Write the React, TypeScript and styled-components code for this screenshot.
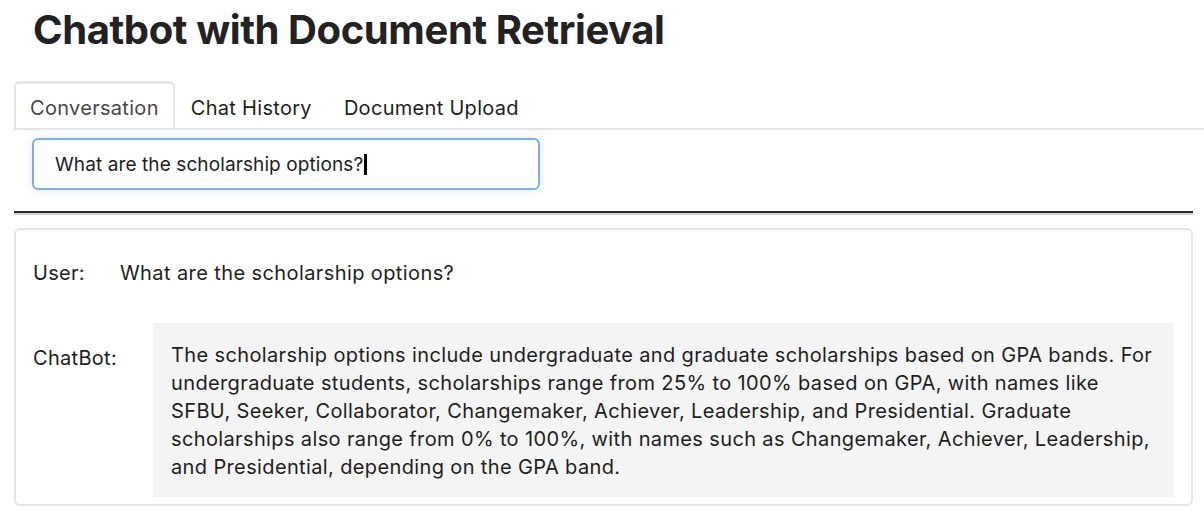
import React from "react";
import styled, { createGlobalStyle } from "styled-components";

const Global = createGlobalStyle`
  html, body { margin: 0; padding: 0; background: #fff; }
  body { font-family: Inter, "Noto Sans", sans-serif; color: #1f1f1f; }
`;

const Page = styled.div`
  width: 1204px;
  height: 520px;
  box-sizing: border-box;
  padding: 0 11px 0 14px;
  overflow: hidden;
`;

const Title = styled.h1`
  margin: 0;
  padding: 6px 0 0 19px;
  height: 81px;
  box-sizing: border-box;
  font-family: Inter, "Liberation Sans", sans-serif;
  font-size: 40px;
  line-height: 48px;
  font-weight: 700;
  letter-spacing: -0.4px;
  color: #222;
`;

const TabBar = styled.div`
  display: flex;
  align-items: flex-start;
  border-bottom: 2px solid #e3e3e3;
  height: 49px;
  box-sizing: border-box;
  margin-right: -11px;
`;

const Tab = styled.div<{ $active?: boolean }>`
  height: 47px;
  box-sizing: border-box;
  display: flex;
  align-items: center;
  padding: 4px 14px 0 14px;
  font-size: 20px;
  letter-spacing: 0.3px;
  color: ${(p) => (p.$active ? "#474747" : "#1e1e1e")};
  background: #fff;
  border: 2px solid ${(p) => (p.$active ? "#e6e6e6" : "transparent")};
  border-top-width: 3px;
  border-bottom: none;
  border-radius: 5px 5px 0 0;
`;

const InputRow = styled.div`
  padding: 8px 0 0 18px;
  height: 81px;
  box-sizing: border-box;
`;

const Input = styled.div`
  width: 508px;
  height: 52px;
  box-sizing: border-box;
  border: 2px solid #7aaee6;
  border-radius: 6px;
  box-shadow: 0 0 8px 2px rgba(120, 170, 230, 0.18);
  display: flex;
  align-items: center;
  padding-left: 21px;
  font-size: 19px;
  letter-spacing: 0.1px;
  color: #1e1e1e;
`;

const Caret = styled.span`
  display: inline-block;
  width: 3px;
  height: 21px;
  background: #000;
  margin-left: 1px;
`;

const Rule = styled.div`
  height: 2px;
  background: #2b2b2b;
  border-bottom: 2px solid #d2d2d2;
`;

const ChatBox = styled.div`
  margin-top: 13px;
  height: 278px;
  box-sizing: border-box;
  border: 2px solid #e4e4e4;
  border-radius: 6px;
  padding: 29px 18px 0 17px;
  display: flex;
  flex-direction: column;
  gap: 36px;
`;

const Message = styled.div`
  display: flex;
  align-items: flex-start;
`;

const Label = styled.div<{ $w: number; $top: number }>`
  width: ${(p) => p.$w}px;
  flex-shrink: 0;
  font-size: 20px;
  line-height: 28px;
  letter-spacing: 0.3px;
  color: #1e1e1e;
  padding-top: ${(p) => p.$top}px;
`;

const UserText = styled.div`
  font-size: 20px;
  line-height: 28px;
  letter-spacing: 0.4px;
  color: #1e1e1e;
`;

const BotBubble = styled.div`
  flex: 1;
  background: #f4f4f4;
  padding: 18px 18px 16px 18px;
  font-size: 20px;
  line-height: 28px;
  letter-spacing: 0.37px;
  color: #1e1e1e;
`;

const Line = styled.span`
  display: block;
  white-space: nowrap;
`;

const answer = [
  "The scholarship options include undergraduate and graduate scholarships based on GPA bands. For",
  "undergraduate students, scholarships range from 25% to 100% based on GPA, with names like",
  "SFBU, Seeker, Collaborator, Changemaker, Achiever, Leadership, and Presidential. Graduate",
  "scholarships also range from 0% to 100%, with names such as Changemaker, Achiever, Leadership,",
  "and Presidential, depending on the GPA band.",
];

export default function App() {
  return (
    <>
      <Global />
      <Page>
        <Title>Chatbot with Document Retrieval</Title>
        <TabBar>
          <Tab $active>Conversation</Tab>
          <Tab>Chat History</Tab>
          <Tab>Document Upload</Tab>
        </TabBar>
        <InputRow>
          <Input>
            What are the scholarship options?
            <Caret />
          </Input>
        </InputRow>
        <Rule />
        <ChatBox>
          <Message>
            <Label $w={87} $top={0}>User:</Label>
            <UserText>What are the scholarship options?</UserText>
          </Message>
          <Message>
            <Label $w={120} $top={21}>ChatBot:</Label>
            <BotBubble>
              {answer.map((l) => (
                <Line key={l}>{l}</Line>
              ))}
            </BotBubble>
          </Message>
        </ChatBox>
      </Page>
    </>
  );
}
